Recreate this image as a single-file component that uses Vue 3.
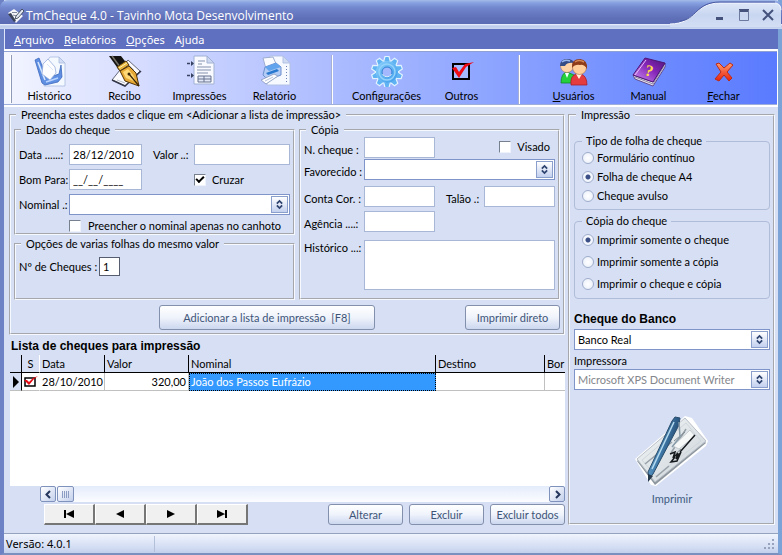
<script setup>
import { ref } from 'vue'

const menus = [
  { key: 'A', rest: 'rquivo' },
  { key: 'R', rest: 'elatórios' },
  { key: 'O', rest: 'pções' },
  { key: '', rest: 'Ajuda' },
]

const sheetTypes = ['Formulário contínuo', 'Folha de cheque A4', 'Cheque avulso']
const copyTypes = ['Imprimir somente o cheque', 'Imprimir somente a cópia', 'Imprimir o cheque e cópia']

const sheet = ref(sheetTypes[1])
const copy = ref(copyTypes[0])
const date = ref('28/12/2010')
const goodFor = ref('__/__/____')
const crossed = ref(true)
const quantity = ref('1')

const teeth = Array.from({ length: 10 }, (_, i) => i * 36)
</script>

<template>
  <div class="window">
    <header class="titlebar">
      <svg class="app-icon" viewBox="0 0 16 16" width="16" height="16" aria-hidden="true">
        <path d="M0 5 L6 1 L15 8 L8 15 Z" fill="#f4f6fa" />
        <path d="M0 6 L3 5 L8 13 L6 14 Z" fill="#3a4258" />
        <path d="M4 4.500 L9 4.500 M5 7 L9 8" stroke="#7f889c" />
        <path d="M14 1 L16 3 L10 10 L7 11 L8 8 Z" fill="#dfe5ee" stroke="#303848" stroke-width="0.800" />
      </svg>
      <h1 class="title">TmCheque 4.0 - Tavinho Mota Desenvolvimento</h1>
      <div class="caption">
        <svg class="caption-shape" viewBox="0 0 112 27" width="112" height="27" aria-hidden="true">
          <defs>
            <linearGradient id="cap" x1="0" y1="0" x2="0" y2="1">
              <stop offset="0" stop-color="#dde7f8" />
              <stop offset="0.500" stop-color="#c9d6f0" />
              <stop offset="1" stop-color="#d3def4" />
            </linearGradient>
          </defs>
          <path d="M0 27 V24 C26 24 24 3 50 3 H104 Q111 3 111 10 V27 Z" fill="url(#cap)" />
          <path d="M0 24 C26 24 24 3 50 3 H104 Q111 3 111 10" fill="none" stroke="#f5f8ff" />
          <path d="M10 21 C26 20 26 2 50 2 H105" fill="none" stroke="#4a5aa0" />
        </svg>
        <div class="caption-buttons">
          <button type="button" aria-label="Minimizar"><svg viewBox="0 0 12 12" width="12" height="12"><path d="M2 9.500H9" stroke="#44527c" stroke-width="3" /></svg></button>
          <button type="button" aria-label="Maximizar"><svg viewBox="0 0 12 12" width="12" height="12"><path d="M1 1.500H11" stroke="#44527c" stroke-width="3" /><path d="M1.500 1V11.500H10.500V1" stroke="#6c7a9e" fill="none" /></svg></button>
          <button type="button" aria-label="Fechar janela"><svg viewBox="0 0 12 12" width="12" height="12"><path d="M1 1L11 11M11 1L1 11" stroke="#44527c" stroke-width="2" /></svg></button>
        </div>
      </div>
    </header>

    <nav class="menubar">
      <button v-for="m in menus" :key="m.rest" type="button"><u v-if="m.key">{{ m.key }}</u>{{ m.rest }}</button>
    </nav>

    <div class="toolbar" role="toolbar">
      <span class="grip"></span>
      <button type="button" class="tool">
        <svg viewBox="0 0 34 32" width="34" height="32">
          <path d="M17 2H26L32 8V31H11V10Z" fill="#f4f8ff" stroke="#a9bbe0" stroke-width="0.800" />
          <path d="M26 2V8H32Z" fill="#d2def6" stroke="#a9bbe0" stroke-width="0.800" />
          <path d="M2 5L6 3L14 23L26 19L28 10L29 22L25 27L12 30L9 28Z" fill="#5f8fe2" stroke="#3c68bd" stroke-width="0.800" />
          <path d="M5 7L12 25" stroke="#d9e8ff" stroke-width="1.500" />
          <path d="M15 4L22 12L23 18L17 25L9 19L10 9Z" fill="#fdfdff" stroke="#98addb" stroke-width="0.800" />
          <path d="M14 9L20 15" stroke="#dae4f7" />
          <path d="M13 27L25 23" stroke="#b9d3ff" stroke-width="1.500" />
        </svg>
        <span>Histórico</span>
      </button>
      <button type="button" class="tool">
        <svg viewBox="0 0 34 32" width="34" height="32">
          <path d="M4 25L20 5L32 16L17 31Z" fill="#fbfbfd" stroke="#64687a" />
          <path d="M4 25L17 31L33 16" fill="none" stroke="#34384a" stroke-width="1.500" />
          <path d="M9 25L17 28M20 9L26 15" stroke="#b8bccb" />
          <path d="M1 1H13L20 10L11 15Z" fill="#15130f" />
          <path d="M4 1L12 12" stroke="#777369" stroke-width="1.500" />
          <path d="M9 12L18 6L21 10L12 16Z" fill="#e8b63d" stroke="#4b3309" />
          <path d="M11 13L19 8" stroke="#fff3b5" />
          <path d="M12 16L21 11L28 18L31 31L17 26Z" fill="#e7a936" stroke="#50340a" />
          <path d="M15 17L20 14L25 20L28 27L18 23Z" fill="#ffd978" />
          <path d="M21 19L31 31" stroke="#382405" stroke-width="1.200" />
          <circle cx="21" cy="19" r="1.500" fill="#382405" />
        </svg>
        <span>Recibo</span>
      </button>
      <button type="button" class="tool">
        <svg viewBox="0 0 34 32" width="34" height="32">
          <path d="M11 1H24L31 8V29H11Z" fill="#f8faff" stroke="#a2b1d3" />
          <path d="M24 1V8H31Z" fill="#ccd8f1" stroke="#a2b1d3" />
          <path d="M15 6H22M15 9H19M14 12H28M14 15H28M14 18H25" stroke="#8591ad" />
          <path d="M15 21H28V27H15ZM15 24H28M21 21V27" fill="#e2e8f5" stroke="#66728f" />
          <path d="M4 8.500H10M4 20.500H10" stroke="#36415f" stroke-dasharray="3 1" stroke-width="1.500" />
          <path d="M8 6L11 8.500L8 11ZM8 18L11 20.500L8 23Z" fill="#36415f" />
        </svg>
        <span>Impressões</span>
      </button>
      <button type="button" class="tool">
        <svg viewBox="0 0 34 32" width="34" height="32">
          <path d="M12 1H25L32 8V30H9V8Z" fill="#f6f9ff" stroke="#b2c1e3" />
          <path d="M25 1V8H32Z" fill="#cfdbf3" stroke="#b2c1e3" />
          <path d="M28.500 11V29" stroke="#6d83b4" stroke-dasharray="1 2" />
          <path d="M5 3L15 2L19 11L8 14Z" fill="#f9fbff" stroke="#9eadd0" />
          <path d="M7 12L18 8L23 12V20L10 25L5 20Z" fill="#b2ccf5" stroke="#6c8fce" />
          <path d="M7 12L18 8L23 12L11 16Z" fill="#61a3ec" />
          <path d="M8 18L19 14L21 16L10 20Z" fill="#2878d0" />
          <path d="M3 25L16 19L20 21L8 29Z" fill="#fdfdff" stroke="#96a6c8" />
          <path d="M7 26L15 22" stroke="#b8c3dc" />
        </svg>
        <span>Relatório</span>
      </button>
      <span class="divider"></span>
      <button type="button" class="tool">
        <svg viewBox="0 0 34 32" width="34" height="32">
          <defs>
            <linearGradient id="gear" x1="0" y1="0" x2="1" y2="1">
              <stop offset="0" stop-color="#8ad0fc" />
              <stop offset="1" stop-color="#3c9aea" />
            </linearGradient>
          </defs>
          <path v-for="t in teeth" :key="t" :transform="`rotate(${t} 17 17)`" d="M13.500 7L15 1.500H19L20.500 7Z" fill="#5fb3f2" stroke="#e2f3ff" stroke-width="1.200" />
          <circle cx="17" cy="17" r="11" fill="url(#gear)" />
          <circle cx="17" cy="17" r="8" fill="none" stroke="#94d3fb" stroke-width="1.500" />
          <circle cx="17" cy="17" r="5" fill="#a4b8ff" stroke="#2f7fd0" />
          <path d="M12.500 19A5 5 0 0 0 21.500 19" fill="none" stroke="#e2f3ff" />
        </svg>
        <span>Configurações</span>
      </button>
      <button type="button" class="tool">
        <svg viewBox="0 0 34 32" width="34" height="32">
          <path d="M8 9H24V24H8Z" fill="#a5baff" stroke="#000" stroke-width="2" />
          <path d="M7 13L11 12L14 17L20 9L29 7L21 12L14 23Z" fill="#f00a14" />
        </svg>
        <span>Outros</span>
      </button>
      <span class="divider"></span>
      <button type="button" class="tool">
        <svg viewBox="0 0 34 32" width="34" height="32">
          <path d="M4 28Q4 18 10 17L17 20L15 28Z" fill="#25d03d" stroke="#118b26" stroke-width="0.800" />
          <path d="M8 18L10 23L12 18" fill="#f4ffff" />
          <circle cx="10" cy="11" r="6.500" fill="#ffd3a5" stroke="#ad7e59" stroke-width="0.600" />
          <path d="M3 11Q3 4 10 4Q16 4 17 8Q10 7 8 11Z" fill="#354c87" />
          <path d="M5 7Q8 4 13 6" stroke="#9ab6ef" stroke-width="1.500" fill="none" />
          <path d="M14 30Q13 21 19 19H24Q30 21 30 30Z" fill="#e53c40" stroke="#a91f29" stroke-width="0.800" />
          <path d="M19 19L22 24L25 19" fill="#fff0dc" />
          <circle cx="22.500" cy="12.500" r="7" fill="#ffce9b" stroke="#a76b43" stroke-width="0.600" />
          <path d="M15 13Q14 4 23 4Q31 5 30 14Q27 9 23 10Q18 9 15 13Z" fill="#8d3b19" />
          <path d="M18 7Q22 4 27 7" stroke="#d48a59" stroke-width="1.500" fill="none" />
        </svg>
        <span><u>U</u>suários</span>
      </button>
      <button type="button" class="tool">
        <svg viewBox="0 0 34 32" width="34" height="32">
          <defs>
            <linearGradient id="book" x1="0" y1="1" x2="1" y2="0">
              <stop offset="0" stop-color="#cf91f2" />
              <stop offset="0.550" stop-color="#8626b9" />
              <stop offset="1" stop-color="#4d1478" />
            </linearGradient>
          </defs>
          <path d="M1 20L21 27L33 8V12L21 31L3 24Z" fill="#e9e6f2" stroke="#50306e" stroke-width="0.800" />
          <path d="M3 22L21 29L32 11" fill="none" stroke="#8f86a5" />
          <path d="M1 20L13 3L33 8L21 27Z" fill="url(#book)" stroke="#4e1775" />
          <path d="M3 20L14 5" stroke="#e7bffa" />
          <text x="13" y="21" transform="rotate(14 17 16)" class="book-mark">?</text>
        </svg>
        <span>Manual</span>
      </button>
      <button type="button" class="tool">
        <svg viewBox="0 0 34 32" width="34" height="32">
          <defs>
            <linearGradient id="cross" x1="0" y1="0" x2="0" y2="1">
              <stop offset="0" stop-color="#ff9b6e" />
              <stop offset="1" stop-color="#e8200e" />
            </linearGradient>
          </defs>
          <path d="M9 9L12 8L17 13L23 8L26 10L20 17L25 23L22 26L17 20L12 26L8 24L14 17Z" fill="url(#cross)" stroke="#bd2b15" stroke-linejoin="round" />
        </svg>
        <span><u>F</u>echar</span>
      </button>
    </div>

    <main class="body">
      <section class="left">
        <fieldset class="group entry">
          <legend>Preencha estes dados e clique em &lt;Adicionar a lista de impressão&gt;</legend>
          <div class="entry-columns">
            <div class="entry-stack">
              <fieldset class="group check-data">
                <legend>Dados do cheque</legend>
                <div class="check-grid">
                  <label for="data">Data ......:</label>
                  <input id="data" v-model="date" type="text" class="field">
                  <label for="valor" class="indent">Valor ..:</label>
                  <input id="valor" type="text" class="field">
                  <label for="bom">Bom Para:</label>
                  <input id="bom" v-model="goodFor" type="text" class="field">
                  <label class="tick last-col"><input v-model="crossed" type="checkbox">Cruzar</label>
                  <label for="nominal">Nominal .:</label>
                  <div class="combo wide">
                    <select id="nominal"><option></option></select>
                    <svg class="spin" viewBox="0 0 17 17" width="17" height="17"><path d="M5.500 7.500L8.500 4.500L11.500 7.500M5.500 9.500L8.500 12.500L11.500 9.500" /></svg>
                  </div>
                  <label class="tick wide wide-tick"><input type="checkbox">Preencher o nominal apenas no canhoto</label>
                </div>
              </fieldset>
              <fieldset class="group multi">
                <legend>Opções de varias folhas do mesmo valor</legend>
                <div class="multi-row">
                  <label for="qtd">Nº de Cheques :</label>
                  <input id="qtd" v-model="quantity" type="text" class="field count">
                </div>
              </fieldset>
            </div>
            <fieldset class="group copy-data">
              <legend>Cópia</legend>
              <div class="copy-grid">
                <label for="ncheque">N. cheque :</label>
                <input id="ncheque" type="text" class="field">
                <label class="tick visado"><input type="checkbox">Visado</label>
                <label for="favorecido">Favorecido :</label>
                <div class="combo wide">
                  <select id="favorecido"><option></option></select>
                  <svg class="spin" viewBox="0 0 17 17" width="17" height="17"><path d="M5.500 7.500L8.500 4.500L11.500 7.500M5.500 9.500L8.500 12.500L11.500 9.500" /></svg>
                </div>
                <label for="conta">Conta Cor. :</label>
                <input id="conta" type="text" class="field">
                <label for="talao" class="indent">Talão .:</label>
                <input id="talao" type="text" class="field">
                <label for="agencia">Agência ....:</label>
                <input id="agencia" type="text" class="field">
                <label for="historico" class="top-label">Histórico ...:</label>
                <textarea id="historico" class="field wide"></textarea>
              </div>
            </fieldset>
          </div>
          <div class="entry-actions">
            <button type="button" class="push add">Adicionar a lista de impressão&nbsp; [F8]</button>
            <button type="button" class="push direct">Imprimir direto</button>
          </div>
        </fieldset>

        <h2 class="list-title">Lista de cheques para impressão</h2>
        <div class="list">
          <table>
            <colgroup>
              <col class="c-mark"><col class="c-s"><col class="c-date"><col class="c-value"><col class="c-name"><col class="c-dest"><col>
            </colgroup>
            <thead>
              <tr><th></th><th class="center">S</th><th>Data</th><th>Valor</th><th>Nominal</th><th>Destino</th><th>Bor</th></tr>
            </thead>
            <tbody>
              <tr>
                <td class="mark"><svg viewBox="0 0 8 12" width="8" height="12"><path d="M1 0L7 6L1 12Z" /></svg></td>
                <td class="state"><svg viewBox="0 0 14 12" width="14" height="12"><path d="M1 2H11V10H1Z" fill="#fff" stroke="#000" stroke-width="1.500" /><path d="M0 4L3 4L5 6L9 2L14 0L10 3L5 9Z" fill="#e60a14" /></svg></td>
                <td>28/10/2010</td>
                <td class="num">320,00</td>
                <td class="picked">João dos Passos Eufrázio</td>
                <td></td>
                <td></td>
              </tr>
            </tbody>
          </table>
        </div>
        <div class="scroll">
          <button type="button" aria-label="Rolar para a esquerda"><svg viewBox="0 0 9 9" width="9" height="9"><path d="M6 1L2.500 4.500L6 8" /></svg></button>
          <span class="thumb"></span>
          <span class="track"></span>
          <button type="button" aria-label="Rolar para a direita"><svg viewBox="0 0 9 9" width="9" height="9"><path d="M3 1L6.500 4.500L3 8" /></svg></button>
        </div>
        <div class="list-actions">
          <div class="navigator">
            <button type="button" aria-label="Primeiro"><svg viewBox="0 0 12 8" width="12" height="8"><path d="M1 0H3V8H1ZM11 0V8L3 4Z" /></svg></button>
            <button type="button" aria-label="Anterior"><svg viewBox="0 0 12 8" width="12" height="8"><path d="M10 0V8L2 4Z" /></svg></button>
            <button type="button" aria-label="Próximo"><svg viewBox="0 0 12 8" width="12" height="8"><path d="M2 0V8L10 4Z" /></svg></button>
            <button type="button" aria-label="Último"><svg viewBox="0 0 12 8" width="12" height="8"><path d="M1 0V8L9 4ZM9 0H11V8H9Z" /></svg></button>
          </div>
          <div class="edit-buttons">
            <button type="button" class="push">Alterar</button>
            <button type="button" class="push">Excluir</button>
            <button type="button" class="push">Excluir todos</button>
          </div>
        </div>
      </section>

      <fieldset class="group printing">
        <legend>Impressão</legend>
        <fieldset class="soft sheet">
          <legend>Tipo de folha de cheque</legend>
          <label v-for="s in sheetTypes" :key="s"><input v-model="sheet" type="radio" name="sheet" :value="s">{{ s }}</label>
        </fieldset>
        <fieldset class="soft copies">
          <legend>Cópia do cheque</legend>
          <label v-for="c in copyTypes" :key="c"><input v-model="copy" type="radio" name="copy" :value="c">{{ c }}</label>
        </fieldset>
        <label for="banco" class="bank-label">Cheque do Banco</label>
        <div class="combo">
          <select id="banco"><option>Banco Real</option></select>
          <svg class="spin" viewBox="0 0 17 17" width="17" height="17"><path d="M5.500 7.500L8.500 4.500L11.500 7.500M5.500 9.500L8.500 12.500L11.500 9.500" /></svg>
        </div>
        <label for="impressora" class="printer-label">Impressora</label>
        <div class="combo">
          <select id="impressora" disabled><option>Microsoft XPS Document Writer</option></select>
          <svg class="spin" viewBox="0 0 17 17" width="17" height="17"><path d="M5.500 7.500L8.500 4.500L11.500 7.500M5.500 9.500L8.500 12.500L11.500 9.500" /></svg>
        </div>
        <button type="button" class="print">
          <svg viewBox="0 0 76 74" width="76" height="74">
            <defs>
              <linearGradient id="pen" x1="0" y1="0" x2="1" y2="0.500">
                <stop offset="0" stop-color="#8fc0e4" />
                <stop offset="0.500" stop-color="#4480b0" />
                <stop offset="1" stop-color="#173a5e" />
              </linearGradient>
              <linearGradient id="slip" x1="0" y1="0" x2="1" y2="1">
                <stop offset="0" stop-color="#f5f8f9" />
                <stop offset="1" stop-color="#c9d1d7" />
              </linearGradient>
            </defs>
            <path d="M1 44L51 1L58 3L74 26L72 31L22 71L17 70Z" fill="#fff" />
            <path d="M3 46L51 4L72 28L21 70Z" fill="#8d969e" />
            <path d="M3 44L51 3L72 26L21 67Z" fill="url(#slip)" stroke="#b9c0c7" />
            <path d="M8 45L52 8L67 26L22 61Z" fill="none" stroke="#d0d7dc" />
            <path d="M11 49L38 27M22 62L35 51M37 38L52 14" stroke="#98a1a8" stroke-width="1.500" />
            <path d="M39 31L56 15L61 21L45 34Z" fill="#f6f8f8" stroke="#c4cbd0" />
            <path d="M40 26L51 17M39 41L47 34" stroke="#7e888f" />
            <path d="M61 20L46 37M36 39L41 37L39 43L44 38L42 44L47 37L43 46L37 47L41 42" fill="none" stroke="#15191c" stroke-width="1.500" />
            <path d="M38 6L41 2L46 3L45 10L19 59L15 64L14 57Z" fill="url(#pen)" stroke="#294d6c" />
            <path d="M40 7L18 54" stroke="#b7dcf0" stroke-width="1.500" />
            <path d="M45 7L46 22L38 32" fill="none" stroke="#879ba9" stroke-width="1.500" />
            <path d="M14 59L19 61L14 67Z" fill="#26394b" />
          </svg>
          <span>Imprimir</span>
        </button>
      </fieldset>
    </main>

    <footer class="status">
      <span class="version">Versão: 4.0.1</span>
      <svg class="resize" viewBox="0 0 12 12" width="12" height="12"><path d="M9 1h2v2h-2zM5 5h2v2h-2zM9 5h2v2h-2zM1 9h2v2h-2zM5 9h2v2h-2zM9 9h2v2h-2z" fill="#97a3bd" /></svg>
    </footer>
  </div>
</template>

<style>
body {
  margin: 0;
  background: #a9c2ea;
}
</style>

<style scoped>
.window {
  box-sizing: border-box;
  min-height: 100vh;
  display: flex;
  flex-direction: column;
  border-style: solid;
  border-color: #6880c4 #7ba3d8 #7c90c0 #6c82c4;
  border-width: 0 4px 2px 4px;
  background: #d6dff3;
  font: 11px/14px Lato, "Liberation Sans", sans-serif;
  color: #000;
}
.window *, .window *::before {
  box-sizing: border-box;
}
button, input, select, textarea {
  font: inherit;
  color: inherit;
  margin: 0;
}
button {
  padding: 0;
  border: 0;
  background: none;
}
svg {
  display: block;
}

.titlebar {
  display: flex;
  align-items: center;
  height: 29px;
  margin: 0 -4px;
  padding: 2px 0 0 8px;
  background: linear-gradient(#a3bbe8 0, #86a0e0 3px, #7186cc 8px, #5f70b8 18px, #5b6bb4 24px, #f0f5ff 24px, #bccbec 26px, #cad7f1 29px);
  border-radius: 8px 8px 0 0;
}
.title {
  flex: 1;
  margin: 0 0 0 2px;
  color: #fff;
  font: 12px/16px "Open Sans", "Noto Sans", sans-serif;
}
.caption {
  position: relative;
  align-self: flex-start;
  width: 112px;
  height: 27px;
  margin-top: -2px;
}
.caption-shape {
  position: absolute;
  inset: 0;
}
.caption-buttons {
  position: relative;
  display: flex;
  justify-content: flex-end;
  gap: 12px;
  padding: 9px 8px 0 0;
}

.menubar {
  display: flex;
  gap: 10px;
  height: 20px;
  padding: 0 9px;
  border-left: 1px solid #dfe8fa;
  background: #6070c0;
  color: #fff;
  font: 11px/19px "Noto Sans", sans-serif;
}

.toolbar {
  display: flex;
  height: 58px;
  padding: 4px 0 0 6px;
  border: solid #fff;
  border-width: 2px 1px 2px 0;
  box-shadow: inset 0 1px #8ea0d4, inset 0 -1px #9eaedb;
  background: linear-gradient(90deg, #f3f5ff 0, #dfe4ff 12%, #b3c1ff 38%, #8fa6ff 62%, #6c8aff 85%, #5a7bff 100%);
}
.grip {
  width: 2px;
  height: 48px;
  border-left: 1px solid #fff;
  border-right: 1px solid #8f9ab8;
}
.tool {
  display: flex;
  flex-direction: column;
  align-items: center;
  width: 75px;
  line-height: 14px;
}
.tool span {
  margin-top: 2px;
}
.divider {
  width: 2px;
  height: 49px;
  margin: 0 16px 0 19px;
  border-left: 1px solid #a5b0d4;
  border-right: 1px solid #fff;
}
.book-mark {
  fill: #ffde4c;
  font: bold 16px "Liberation Serif", serif;
}

.body {
  flex: 1;
  display: grid;
  grid-template-columns: minmax(0, 1fr) 207px;
  gap: 3px;
  padding: 1px 3px 8px 5px;
}
.left {
  display: flex;
  flex-direction: column;
}
fieldset {
  min-width: 0;
  margin: 0;
  padding: 0;
}
.group {
  border: 2px groove #f6f9ff;
}
legend {
  margin-left: 2px;
  padding: 0 5px;
  line-height: 14px;
}
.entry {
  padding: 1px 3px 3px;
}
.entry-columns {
  display: grid;
  grid-template-columns: 281fr 261fr;
  gap: 4px;
}
.entry-stack {
  display: flex;
  flex-direction: column;
  gap: 2px;
}
.check-data {
  padding: 7px 3px 1px;
}
.check-grid {
  display: grid;
  grid-template-columns: 50px 73px 52px 1fr;
  grid-template-rows: 21px 21px 21px 13px;
  row-gap: 4px;
  align-items: center;
  white-space: nowrap;
}
.indent {
  padding-left: 11px;
}
.last-col {
  grid-column: 4;
}
.wide {
  grid-column: 2 / -1;
}
.field {
  width: 100%;
  height: 21px;
  padding: 0 3px;
  border: 1px solid #a9b7d6;
  border-radius: 0;
  background: #fff;
  outline: 0;
}
.tick {
  display: flex;
  align-items: center;
  gap: 6px;
}
.wide-tick {
  gap: 7px;
}
.tick input {
  appearance: none;
  display: grid;
  place-items: center;
  width: 12px;
  height: 12px;
  border: 1px solid #eef2fb;
  border-top-color: #77808f;
  border-left-color: #77808f;
  background: #fff;
}
.tick input:checked::before {
  content: "";
  width: 8px;
  height: 5px;
  margin-top: -2px;
  border: solid #000;
  border-width: 0 0 2px 2px;
  transform: rotate(-45deg);
}
.combo {
  display: grid;
  align-items: center;
}
.combo select {
  grid-area: 1 / 1;
  appearance: none;
  width: 100%;
  height: 21px;
  padding: 0 20px 0 3px;
  border: 1px solid #7f94c8;
  border-radius: 0;
  background: #fff;
  outline: 0;
}
.combo select:disabled {
  color: #83868c;
  opacity: 1;
}
.spin {
  grid-area: 1 / 1;
  justify-self: end;
  margin-right: 2px;
  border: 1px solid #8b9fcc;
  background: linear-gradient(#fff, #c3d0ef);
  pointer-events: none;
}
.spin path {
  fill: none;
  stroke: #2f4470;
  stroke-width: 2;
}
.multi {
  flex: 1;
  padding: 6px 3px;
}
.multi-row {
  display: flex;
  align-items: center;
}
.multi-row label {
  width: 80px;
  white-space: nowrap;
}
.count {
  width: 21px;
  height: 19px;
  border-color: #555d6e;
}
.copy-data {
  padding: 0 3px 8px;
}
.copy-grid {
  display: grid;
  grid-template-columns: 60px 71px 49px 1fr;
  grid-template-rows: 22px 27px 25px 29px 50px;
  align-items: start;
  white-space: nowrap;
}
.copy-grid label {
  line-height: 25px;
}
.copy-grid .tick {
  grid-column: 3 / -1;
  justify-self: end;
  padding-right: 5px;
  line-height: 19px;
}
.copy-grid .top-label {
  grid-column: 1;
  line-height: 16px;
}
textarea.field {
  display: block;
  height: 50px;
  resize: none;
}
.entry-actions {
  display: flex;
  justify-content: space-between;
  padding: 5px 0 0 145px;
}
.push {
  height: 21px;
  border: 1px solid #8290ad;
  border-radius: 3px;
  background: linear-gradient(#fff, #eff3fb 50%, #ccd7ef);
  color: #3e5578;
}
.add, .direct {
  height: 25px;
}
.add {
  width: 216px;
}
.direct {
  width: 95px;
}

.list-title {
  margin: 0;
  padding: 4px 2px 2px;
  font: bold 12px/14px "Liberation Sans", Arial, sans-serif;
}
.list {
  flex: 1;
  margin-left: 1px;
  overflow: hidden;
  background: #fff;
}
table {
  width: 100%;
  table-layout: fixed;
  border-collapse: separate;
  border-spacing: 0;
}
.c-mark { width: 12px; }
.c-s { width: 18px; }
.c-date { width: 65px; }
.c-value { width: 84px; }
.c-name { width: 247px; }
.c-dest { width: 109px; }
th, td {
  height: 18px;
  padding: 0 2px;
  overflow: hidden;
  text-align: left;
  white-space: nowrap;
}
th {
  border: solid #000;
  border-width: 0 1px 1px 0;
  background: #d6dff3;
  font-weight: normal;
}
th.center {
  border-right-color: #fff;
  text-align: center;
}
th:last-child, td:last-child {
  border-right: 0;
}
td {
  border: solid #c0c0c0;
  border-width: 0 1px 1px 0;
}
td.mark {
  border-right-color: #000;
  background: #d6dff3;
}
td.state {
  border-right-color: #fff;
}
td.num {
  text-align: right;
}
td.picked {
  border: 1px dotted #000;
  background: #3399ff;
  color: #fff;
  padding: 0 1px;
}
.scroll {
  display: flex;
  height: 16px;
  margin-left: 31px;
  background: #f3f7ff;
}
.scroll button, .thumb {
  display: grid;
  place-items: center;
  width: 16px;
  height: 16px;
  border: 1px solid #7f92bb;
  border-radius: 2px;
  background: linear-gradient(135deg, #fff, #c3d0ec);
}
.scroll path {
  fill: none;
  stroke: #24365c;
  stroke-width: 2;
}
.thumb {
  width: 17px;
  margin-left: 1px;
}
.thumb::before {
  content: "";
  width: 8px;
  height: 7px;
  background: repeating-linear-gradient(90deg, #8c9dc4 0 1px, transparent 1px 2px);
}
.track {
  flex: 1;
  background: linear-gradient(#e4ecfb, #fbfcff);
}
.list-actions {
  display: flex;
  justify-content: space-between;
  padding: 2px 0 0 35px;
}
.navigator {
  display: flex;
}
.navigator button {
  display: grid;
  place-items: center;
  width: 51px;
  height: 21px;
  border: 1px solid #fff;
  border-right: 2px solid #767676;
  border-bottom: 2px solid #767676;
  background: #f0f0f0;
}
.edit-buttons {
  display: flex;
  gap: 6px;
}
.edit-buttons .push {
  width: 75px;
}

.printing {
  display: flex;
  flex-direction: column;
  padding: 12px 3px 0 4px;
}
.soft {
  border: 1px solid #b0bdd9;
  border-radius: 4px;
  padding: 0 7px;
}
.soft legend {
  margin-left: 0;
  padding: 0 4px;
}
.sheet {
  margin-bottom: 4px;
}
.soft label {
  display: flex;
  align-items: center;
  gap: 3px;
  height: 19px;
}
.sheet label:last-child {
  margin-bottom: 4px;
}
.copies {
  padding-top: 1px;
}
.copies label {
  height: 22px;
}
.copies label:last-child {
  margin-bottom: 3px;
}
.soft input {
  appearance: none;
  width: 12px;
  height: 12px;
  border: 1px solid #9fadcb;
  border-radius: 50%;
  background: radial-gradient(#fff, #e6ecf8);
}
.soft input:checked {
  background: radial-gradient(#3a4f86 0 2px, #f4f7fd 3px);
}
.bank-label {
  margin-top: 13px;
  padding-bottom: 3px;
  font: bold 12px/14px "Liberation Sans", Arial, sans-serif;
}
.printer-label {
  padding: 4px 0 1px;
}
.print {
  display: flex;
  flex-direction: column;
  align-items: center;
  align-self: center;
  gap: 3px;
  margin-top: 25px;
  color: #3e5c82;
}

.status {
  display: flex;
  align-items: center;
  justify-content: space-between;
  height: 20px;
  padding: 0 3px 0 2px;
  border-top: 1px solid #94a1bf;
  background: linear-gradient(#f0f4fd, #d3ddf3 70%, #c3d0ec);
  font: 11px/16px "Noto Sans", sans-serif;
}
.version {
  width: 149px;
  border-right: 1px solid #b4c0da;
}
.resize {
  align-self: flex-end;
  margin-bottom: 3px;
}
</style>
